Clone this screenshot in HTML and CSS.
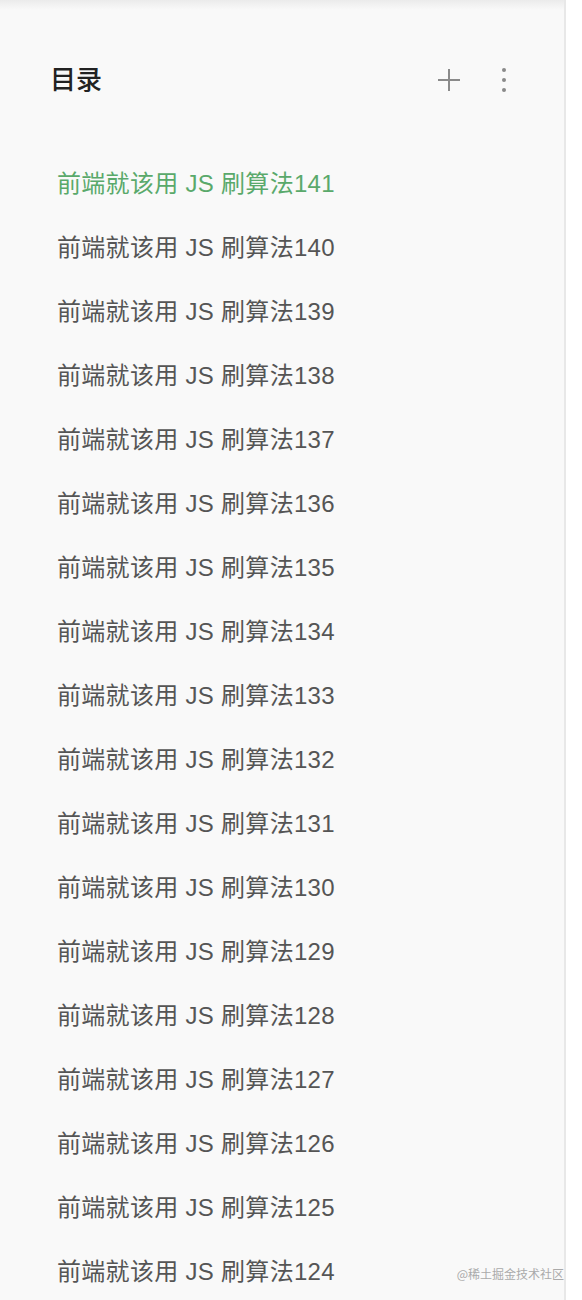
FILE: index.html
```html
<!DOCTYPE html>
<html lang="zh-CN">
<head>
    <meta charset="UTF-8">
    <meta name="viewport" content="width=device-width, initial-scale=1.0">
    <title>目录</title>
    <link rel="stylesheet" href="styles.css">
</head>
<body>
    <div class="sidebar">
        <div class="toc-header">
            <h2 class="toc-title">目录</h2>
            <div class="toc-actions">
                <button class="icon-btn" aria-label="添加">
                    <svg width="24" height="24" viewBox="0 0 24 24">
                        <path d="M12 1v22M1 12h22" stroke="#8a8a8a" stroke-width="2" fill="none"/>
                    </svg>
                </button>
                <button class="icon-btn" aria-label="更多">
                    <svg width="6" height="26" viewBox="0 0 6 26">
                        <circle cx="3" cy="3" r="2" fill="#8a8a8a"/>
                        <circle cx="3" cy="13" r="2" fill="#8a8a8a"/>
                        <circle cx="3" cy="23" r="2" fill="#8a8a8a"/>
                    </svg>
                </button>
            </div>
        </div>

        <ul class="toc-list">
            <li class="toc-item active">前端就该用 JS 刷算法141</li>
            <li class="toc-item">前端就该用 JS 刷算法140</li>
            <li class="toc-item">前端就该用 JS 刷算法139</li>
            <li class="toc-item">前端就该用 JS 刷算法138</li>
            <li class="toc-item">前端就该用 JS 刷算法137</li>
            <li class="toc-item">前端就该用 JS 刷算法136</li>
            <li class="toc-item">前端就该用 JS 刷算法135</li>
            <li class="toc-item">前端就该用 JS 刷算法134</li>
            <li class="toc-item">前端就该用 JS 刷算法133</li>
            <li class="toc-item">前端就该用 JS 刷算法132</li>
            <li class="toc-item">前端就该用 JS 刷算法131</li>
            <li class="toc-item">前端就该用 JS 刷算法130</li>
            <li class="toc-item">前端就该用 JS 刷算法129</li>
            <li class="toc-item">前端就该用 JS 刷算法128</li>
            <li class="toc-item">前端就该用 JS 刷算法127</li>
            <li class="toc-item">前端就该用 JS 刷算法126</li>
            <li class="toc-item">前端就该用 JS 刷算法125</li>
            <li class="toc-item">前端就该用 JS 刷算法124</li>
        </ul>
    </div>

    <div class="watermark">@稀土掘金技术社区</div>
</body>
</html>
```

FILE: styles.css
```css
html, body {
    height: 100%;
}
body {
    font-family: "Liberation Sans", "Noto Sans CJK SC", sans-serif;
    background-color: #fff;
    margin: 0;
    padding: 0;
    overflow: hidden;
    color: #555;
}
.sidebar {
    width: 564px;
    min-height: 100vh;
    background-color: #f9f9f9;
    background-image: linear-gradient(to bottom, #ebebeb 0, #f9f9f9 10px);
    border-right: 2px solid #e8e8e8;
}
.toc-header {
    display: flex;
    align-items: center;
    justify-content: space-between;
    height: 40px;
    padding: 60px 57px 0 50px;
}
.toc-title {
    margin: 0;
    font-size: 26px;
    font-weight: 500;
    color: #222;
    line-height: 40px;
}
.toc-actions {
    display: flex;
    align-items: center;
    gap: 40px;
}
.icon-btn {
    display: flex;
    align-items: center;
    justify-content: center;
    padding: 0;
    border: none;
    background: none;
    cursor: pointer;
}
.toc-list {
    list-style: none;
    margin: 52px 0 0;
    padding: 0 0 0 57px;
}
.toc-item {
    height: 64px;
    line-height: 64px;
    font-size: 24px;
    letter-spacing: 0.3px;
    color: #555;
    white-space: nowrap;
}
.toc-item.active {
    color: #5aa96b;
}
.watermark {
    position: absolute;
    right: 18px;
    bottom: 18px;
    font-family: "Noto Sans CJK SC", sans-serif;
    font-size: 12px;
    color: #aaa;
}
```
